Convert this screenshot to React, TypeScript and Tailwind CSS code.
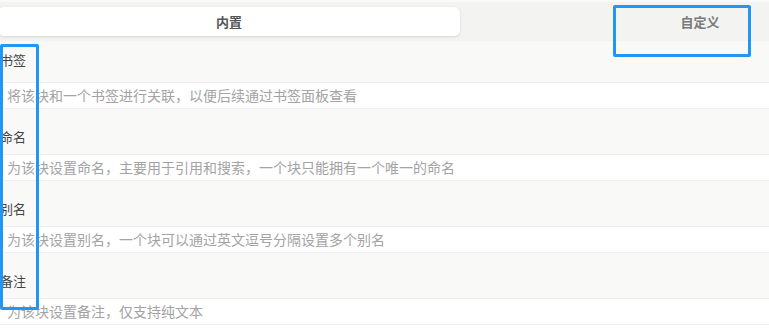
const rows = [
    { label: '书签', desc: '将该块和一个书签进行关联，以便后续通过书签面板查看' },
    { label: '命名', desc: '为该块设置命名，主要用于引用和搜索，一个块只能拥有一个唯一的命名' },
    { label: '别名', desc: '为该块设置别名，一个块可以通过英文逗号分隔设置多个别名' },
    { label: '备注', desc: '为该块设置备注，仅支持纯文本' },
];

export default function App() {
    return (
        <div
            className="relative w-[769px] h-[334px] overflow-hidden bg-white"
            style={{ fontFamily: '"Noto Sans CJK SC", "Noto Sans", sans-serif' }}
        >
            <div className="h-[2px] bg-[#fafaf9]" />
            {/* tabs */}
            <div className="h-[39px] bg-[#f3f3f2] flex items-start">
                <div className="shrink-0 -ml-[2px] mt-[5px] w-[462px] h-[29px] rounded-md bg-white shadow-[0_1px_3px_rgba(0,0,0,0.12)] flex items-center justify-center">
                    <span className="text-[13px] font-bold text-[#555]">内置</span>
                </div>
                <div className="shrink-0 ml-[10px] mt-[5px] w-[460px] h-[29px] flex items-center justify-center">
                    <span className="text-[13px] font-semibold text-[#7a7a7a]">自定义</span>
                </div>
            </div>

            {rows.map((r, i) => (
                <div key={r.label}>
                    <div
                        className={`bg-[#f9f9f8] text-[13px] leading-[19px] text-[#444] ${
                            i === 0 ? 'h-[41px] pt-[9px]' : 'h-[45px] pt-[18px]'
                        }`}
                    >
                        {r.label}
                    </div>
                    <div className="h-[27px] bg-white border-y border-[#efefef] flex items-center pl-[7px] text-[14px] text-[#a3a3a3] whitespace-nowrap">
                        {r.desc}
                    </div>
                </div>
            ))}

            {/* annotation boxes */}
            <div className="absolute left-0 top-[44px] w-[39px] h-[266px] border-[3px] border-[#2196f3] rounded-[2px]" />
            <div className="absolute left-[613px] top-[5px] w-[138px] h-[52px] border-[3px] border-[#2196f3] rounded-[2px]" />
        </div>
    );
}
